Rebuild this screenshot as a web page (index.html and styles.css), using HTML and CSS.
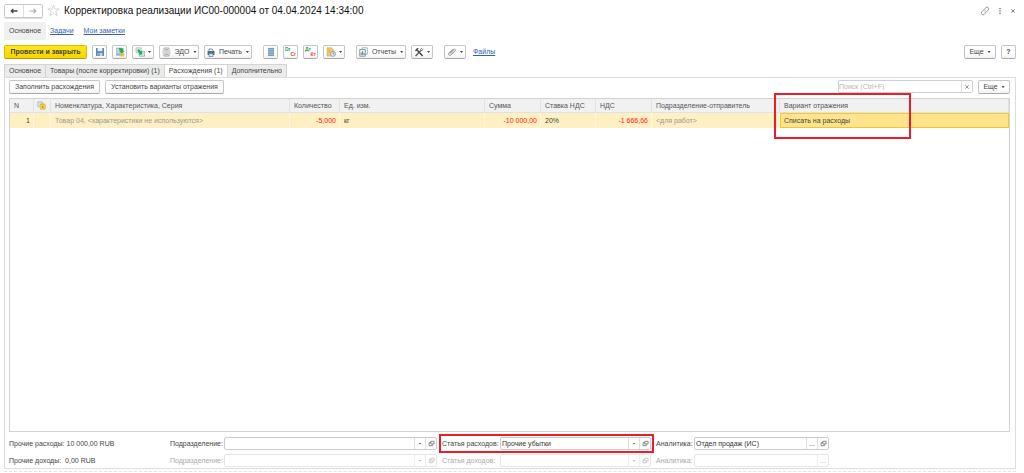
FILE: index.html
```
<!DOCTYPE html>
<html lang="ru">
<head>
<meta charset="utf-8">
<title>Корректировка реализации</title>
<link rel="stylesheet" href="styles.css">
</head>
<body>
<svg class="defs" aria-hidden="true">
  <symbol id="open" viewBox="0 0 8 8"><path d="M3.2 1.5H7v3H3.2zM3 3H1.3v3.5H5V4.8" fill="none" stroke="currentColor" stroke-width=".7"/></symbol>
</svg>
<div class="window">
  <header class="titlebar">
    <div class="history">
      <button class="hist" aria-label="Назад"><svg width="10" height="8" viewBox="0 0 10 8"><path d="M2 4h6.5M4.4 1.9L2.2 4l2.2 2.1" fill="none" stroke="#444" stroke-width="1.3"/></svg></button>
      <button class="hist" aria-label="Вперед"><svg width="10" height="8" viewBox="0 0 10 8"><path d="M1.5 4H8M5.6 1.9L7.8 4 5.6 6.1" fill="none" stroke="#aaa" stroke-width="1.1"/></svg></button>
    </div>
    <svg class="star" width="13" height="13" viewBox="0 0 13 13"><path d="M6.5 1l1.4 4h4.3L8.8 7.5l1.3 4.1-3.6-2.5-3.6 2.5 1.3-4.1L.8 5h4.3z" fill="#fff" stroke="#c4c4c4" stroke-width=".7"/></svg>
    <h1 class="title">Корректировка реализации ИС00-000004 от 04.04.2024 14:34:00</h1>
    <div class="winctl">
      <button class="plain" aria-label="Ссылка"><svg width="10" height="10" viewBox="0 0 10 10"><path d="M4.4 3.2l1.4-1.5a1.6 1.6 0 0 1 2.5 2.3L6.7 5.7a1.6 1.6 0 0 1-2.3 0M5.6 6.8L4.2 8.3A1.6 1.6 0 0 1 1.7 6l1.6-1.7a1.6 1.6 0 0 1 2.3 0" fill="none" stroke="#777" stroke-width=".7"/></svg></button>
      <button class="plain" aria-label="Меню"><svg width="4" height="8" viewBox="0 0 4 8"><path d="M1.3 1h1.4v1.3H1.3zM1.3 3.4h1.4v1.3H1.3zM1.3 5.8h1.4v1.3H1.3z" fill="#777"/></svg></button>
      <button class="plain" aria-label="Закрыть"><svg width="6" height="6" viewBox="0 0 6 6"><path d="M1.3 1.3l3.4 3.4M4.7 1.3L1.3 4.7" stroke="#777" stroke-width=".9"/></svg></button>
    </div>
  </header>

  <nav class="sections">
    <span class="section current">Основное</span>
    <a class="link" href="#">Задачи</a>
    <a class="link" href="#">Мои заметки</a>
  </nav>

  <div class="toolbar">
    <div class="group">
      <button class="btn primary">Провести и закрыть</button>
      <button class="btn icon" aria-label="Записать"><svg width="10" height="10" viewBox="0 0 10 10"><path d="M1 1h8v8H1z" fill="#5b88b5"/><path d="M2.6 1h4.8v3.2H2.6z" fill="#e6eef6"/><path d="M2.6 6h4.8v3H2.6z" fill="#c5d6e6"/><path d="M3.4 6.6h1.2V9H3.4z" fill="#4472a0"/></svg></button>
      <button class="btn icon" aria-label="Провести"><svg width="10" height="10" viewBox="0 0 10 10"><path d="M1.2.7h5.6v8H1.2z" fill="#8fb3ce"/><path d="M2.2 2.5h2.5M2.2 4.2h2M2.2 5.9h2.5" stroke="#fff" stroke-width=".8"/><path d="M4 1.2h4.4v3h1.2L7.1 6.4 4.8 4.2h1.4L4 2.6z" fill="#26a84b"/><path d="M5.4 6.2h3.9v3.3H5.4z" fill="#f0bf3c"/></svg></button>
      <button class="btn icon wide" aria-label="Создать на основании"><svg width="10" height="10" viewBox="0 0 10 10"><path d="M1 .8h5.3v5H1z" fill="#dce8e4" stroke="#8fa9a8" stroke-width=".6"/><path d="M4.5 4.3h5v5h-5z" fill="#cfe0ea" stroke="#7c9fb0" stroke-width=".6"/><path d="M2.3 3.2l1.3-1.1 2.5 2.5 1-1v4h-4l1.1-1.1z" fill="#1cb054"/></svg><i class="caret"></i></button>
      <button class="btn edo"><svg width="9" height="10" viewBox="0 0 9 10"><path d="M2 3V1h5v2M2 7v2h5V7M.5 4h8M.5 6h8M3 2.5h3M3 7.6h3" fill="none" stroke="#929292" stroke-width=".8"/></svg><span>ЭДО</span><i class="caret"></i></button>
      <button class="btn print"><svg width="8" height="9" viewBox="0 0 8 9"><path d="M2 3V1h3l1 1v1" fill="#fff" stroke="#557a96" stroke-width=".8"/><path d="M.5 3h7v4h-7z" fill="#4d718d"/><path d="M2 5.5h4v3H2z" fill="#dce6ed" stroke="#4d718d" stroke-width=".6"/></svg><span>Печать</span><i class="caret"></i></button>
    </div>
    <div class="group">
      <button class="btn icon" aria-label="Реестр"><svg width="10" height="10" viewBox="0 0 10 10"><path d="M2 1h6v8H2z" fill="#a9c8df"/><path d="M2 1.4h6M2 3.2h6M2 5h6M2 6.8h6M2 8.6h6" stroke="#5a82a3" stroke-width=".7"/></svg></button>
      <button class="btn icon" aria-label="Проводки Dr Cr"><span class="pair"><b class="dt">Dr</b><b class="ct">Cr</b></span></button>
      <button class="btn icon" aria-label="Проводки Дт Кт"><span class="pair"><b class="dt">Дт</b><b class="ct">Кт</b></span></button>
      <button class="btn icon wide" aria-label="Документы"><svg width="10" height="10" viewBox="0 0 10 10"><path d="M1 .8h4.5L7.6 3v6H1z" fill="#f3cd69" stroke="#d5a94b" stroke-width=".6"/><path d="M2.2 3.2h2.6M2.2 5h2" stroke="#c29333" stroke-width=".6"/><circle cx="7" cy="6.8" r="2.5" fill="#e8eef5" stroke="#7189aa" stroke-width=".7"/><path d="M7 5.2V7h1.5" fill="none" stroke="#456" stroke-width=".6"/></svg><i class="caret"></i></button>
    </div>
    <div class="group">
      <button class="btn reports"><svg width="9" height="10" viewBox="0 0 9 10"><path d="M3 .8h5.3v6.5H3z" fill="#fff" stroke="#7c98a6" stroke-width=".7"/><path d="M.7 2.5h5.6v6.7H.7z" fill="#edf4f6" stroke="#64889a" stroke-width=".8"/><path d="M2.2 8V5.5" stroke="#de5148"/><path d="M3.6 8V4" stroke="#3ea85d"/><path d="M5 8V6" stroke="#4679ba"/></svg><span>Отчеты</span><i class="caret"></i></button>
      <button class="btn icon wide" aria-label="Настройки"><svg width="10" height="10" viewBox="0 0 10 10"><path d="M3 3l5.6 6" fill="none" stroke="#444" stroke-width="1.5"/><path d="M1 3.2L3.2 1l1.6.5-2.6 2.7z" fill="#444"/><path d="M1.6 9l5-5.2" fill="none" stroke="#555" stroke-width="1.3"/><path d="M8 .9L6.6 2.3v1.2h1.3l1.5-1.4" fill="none" stroke="#555" stroke-width=".9"/></svg><i class="caret"></i></button>
    </div>
    <div class="group">
      <button class="btn icon wide" aria-label="Присоединенные файлы"><svg width="10" height="10" viewBox="0 0 10 10"><path d="M2.5 6.4l3.9-3.9c1.5-1.2 2.7.3 1.6 1.6L4.3 7.8C2.6 9.3.7 7.5 2.1 5.8l3.5-3.5M3.7 6.7l3.1-3.1" fill="none" stroke="#777" stroke-width=".8"/></svg><i class="caret"></i></button>
      <a class="link files" href="#">Файлы</a>
    </div>
    <div class="group end">
      <button class="btn more"><span>Еще</span><i class="caret"></i></button>
      <button class="btn icon help">?</button>
    </div>
  </div>

  <div class="tabs" role="tablist">
    <button class="tab" role="tab">Основное</button>
    <button class="tab" role="tab">Товары (после корректировки) (1)</button>
    <button class="tab active" role="tab" aria-selected="true">Расхождения (1)</button>
    <button class="tab" role="tab">Дополнительно</button>
  </div>

  <main class="panel">
    <div class="commands">
      <button class="btn fill">Заполнить расхождения</button>
      <button class="btn variants">Установить варианты отражения</button>
      <div class="search">
        <input class="search-input" type="text" aria-label="Поиск" placeholder="Поиск (Ctrl+F)">
        <button class="addon" aria-label="Очистить"><svg width="6" height="6" viewBox="0 0 6 6"><path d="M1.3 1.3l3.4 3.4M4.7 1.3L1.3 4.7" stroke="#777" stroke-width=".8"/></svg></button>
      </div>
      <button class="btn more"><span>Еще</span><i class="caret"></i></button>
    </div>

    <div class="list">
      <table class="grid">
        <colgroup><col class="c-n"><col class="c-mark"><col class="c-item"><col class="c-qty"><col class="c-unit"><col class="c-sum"><col class="c-rate"><col class="c-vat"><col class="c-dept"><col></colgroup>
        <thead>
          <tr>
            <th>N</th>
            <th class="mark"><svg width="9" height="9" viewBox="0 0 9 9"><path d="M.8.8H5v5H.8z" fill="#d9dde0" stroke="#aab" stroke-width=".6"/><path d="M3.3 3.5h4.9v4.7H3.3z" fill="#f7cf45" stroke="#dba928" stroke-width=".6"/><path d="M4.5 3.4V2.2h2.4v1.2" fill="none" stroke="#d9ac32" stroke-width=".7"/><path d="M5.7 5v2" stroke="#8b6c14" stroke-width=".8"/></svg></th>
            <th>Номенклатура, Характеристика, Серия</th>
            <th>Количество</th>
            <th>Ед. изм.</th>
            <th>Сумма</th>
            <th>Ставка НДС</th>
            <th>НДС</th>
            <th>Подразделение-отправитель</th>
            <th class="marked">Вариант отражения<span class="frame frame-column"></span></th>
          </tr>
        </thead>
        <tbody>
          <tr>
            <td class="num">1</td>
            <td></td>
            <td class="muted">Товар 04, &lt;характеристики не используются&gt;</td>
            <td class="num neg">-5,000</td>
            <td>кг</td>
            <td class="num neg">-10 000,00</td>
            <td>20%</td>
            <td class="num neg">-1 666,66</td>
            <td class="muted">&lt;для работ&gt;</td>
            <td class="selected">Списать на расходы</td>
          </tr>
        </tbody>
      </table>
    </div>

    <div class="details">
      <span class="total">Прочие расходы: 10 000,00 RUB</span>
      <div class="field f-dept">
        <label for="dept1">Подразделение:</label>
        <div class="box"><input id="dept1" type="text"><button class="addon" aria-label="Выбрать"><i class="caret"></i></button><button class="addon" aria-label="Открыть"><svg width="7" height="7"><use href="#open"/></svg></button></div>
      </div>
      <div class="field f-item marked">
        <label for="item1">Статья расходов:</label>
        <div class="box"><input id="item1" type="text" value="Прочие убытки"><button class="addon" aria-label="Выбрать"><i class="caret"></i></button><button class="addon" aria-label="Открыть"><svg width="7" height="7"><use href="#open"/></svg></button></div>
        <span class="frame frame-field"></span>
      </div>
      <div class="field f-an">
        <label for="an1">Аналитика:</label>
        <div class="box"><input id="an1" type="text" value="Отдел продаж (ИС)"><button class="addon">...</button><button class="addon" aria-label="Открыть"><svg width="7" height="7"><use href="#open"/></svg></button></div>
      </div>

      <span class="total">Прочие доходы:&nbsp; 0,00 RUB</span>
      <div class="field f-dept off">
        <label for="dept2">Подразделение:</label>
        <div class="box"><input id="dept2" type="text" disabled><button class="addon" aria-label="Выбрать" disabled><i class="caret"></i></button><button class="addon" aria-label="Открыть" disabled><svg width="7" height="7"><use href="#open"/></svg></button></div>
      </div>
      <div class="field f-item off">
        <label for="item2">Статья доходов:</label>
        <div class="box"><input id="item2" type="text" disabled><button class="addon" aria-label="Выбрать" disabled><i class="caret"></i></button><button class="addon" aria-label="Открыть" disabled><svg width="7" height="7"><use href="#open"/></svg></button></div>
      </div>
      <div class="field f-an off">
        <label for="an2">Аналитика:</label>
        <div class="box"><input id="an2" type="text" disabled><button class="addon" disabled>...</button></div>
      </div>
    </div>
  </main>
  <div class="bottom"></div>
</div>
</body>
</html>
```
FILE: styles.css
```
* { box-sizing: border-box; }
body {
  margin: 0;
  background: #fff;
  color: #444;
  font: 7px/12px "Liberation Sans", Arial, sans-serif;
}
button, input { font: inherit; color: inherit; margin: 0; }
button { padding: 0; }
svg { display: block; flex: none; }
.defs { position: absolute; width: 0; height: 0; }

.window {
  min-height: 100vh;
  display: flex;
  flex-direction: column;
  padding: 3px 8px 1px 4px;
}

.titlebar { display: flex; align-items: center; height: 15px; }
.history {
  display: flex;
  height: 14px;
  border: 1px solid #c8c8c8;
  border-radius: 2px;
  box-shadow: 0 1px 0 #ddd;
}
.hist {
  width: 18px;
  border: 0;
  background: #fff;
  display: flex;
  align-items: center;
  justify-content: center;
}
.hist + .hist { width: 19px; border-left: 1px solid #ddd; }
.star { margin: 0 4px; }
.title { margin: 0; font-size: 10px; line-height: 14px; font-weight: 400; color: #111; }
.winctl { margin-left: auto; display: flex; align-items: center; gap: 8px; }
.plain { border: 0; background: none; display: flex; }

.sections { display: flex; align-items: center; gap: 10px; height: 18px; margin-top: 4px; }
.section { padding: 3px 5px; margin-right: -6px; }
.current { background: #f0f0f0; border-radius: 2px; }
.link { color: #2f62b5; text-decoration: underline; }

.toolbar { display: flex; gap: 11px; margin-top: 5px; }
.group { display: flex; align-items: center; gap: 5px; }
.end { margin-left: auto; }
.btn {
  height: 14px;
  display: flex;
  align-items: center;
  justify-content: center;
  gap: 4px;
  border: 1px solid #c6c6c6;
  border-bottom-color: #aaa;
  border-radius: 2px;
  background: linear-gradient(#fff 60%, #f2f2f2);
  line-height: 12px;
  white-space: nowrap;
}
.primary {
  width: 83px;
  font-weight: 700;
  background: linear-gradient(#ffe61a, #f7d500);
  border-color: #d9bd00;
  border-bottom-color: #b59d00;
}
.icon { width: 15px; }
.wide { width: 22px; gap: 3px; }
.edo { width: 40px; }
.print { width: 48px; }
.reports { width: 50px; }
.more { width: 32px; }
.fill { width: 91px; }
.variants { width: 119px; }
.help { font-weight: 700; }
.files { margin-left: 2px; }
.caret {
  width: 3px;
  height: 2px;
  background: currentColor;
  clip-path: polygon(0 0, 100% 0, 50% 100%);
}
.pair { display: flex; flex-direction: column; width: 11px; font-size: 5px; line-height: 5px; }
.dt { color: #24a05a; text-align: left; }
.ct { color: #e14a4a; text-align: right; }

.tabs { display: flex; margin-top: 5px; }
.tab {
  height: 13px;
  padding: 0 4px;
  border: 1px solid #d4d4d4;
  border-width: 1px 1px 0 0;
  background: #ebebeb;
  line-height: 12px;
}
.tab:first-child { border-left-width: 1px; }
.active { background: #fff; }

.panel {
  flex: 1;
  display: flex;
  flex-direction: column;
  padding: 2px 5px 1px 4px;
  border: 1px solid #ddd;
}
.commands { display: flex; gap: 5px; }
.search { display: flex; width: 135px; height: 13px; margin-left: auto; border: 1px solid #d0d0d0; border-radius: 2px; }
.search-input { flex: 1; min-width: 0; border: 0; padding: 0; background: none; outline: 0; }
.search-input::placeholder { color: #b5b5b5; }
.addon {
  width: 11px;
  flex: none;
  display: flex;
  align-items: center;
  justify-content: center;
  border: 0;
  border-left: 1px solid #ddd;
  background: none;
  line-height: 10px;
}

.list { flex: 1; margin-top: 4px; border: 1px solid #d2d2d2; }
.grid { width: 100%; table-layout: fixed; border-collapse: separate; border-spacing: 0; }
.c-n { width: 24px; }
.c-mark { width: 17px; }
.c-item { width: 239px; }
.c-qty { width: 50px; }
.c-unit { width: 145px; }
.c-sum { width: 56px; }
.c-rate { width: 55px; }
.c-vat { width: 56px; }
.c-dept { width: 128px; }
.grid th, .grid td {
  padding: 0 4px;
  white-space: nowrap;
  text-align: left;
  font-weight: 400;
}
.grid th { height: 14px; background: #f1f1f1; border-right: 1px solid #e2e2e2; border-bottom: 1px solid #e2e2e2; color: #555; }
.grid td { height: 15px; background: #fff0c4; border-right: 1px solid #fff6dd; }
.grid .mark { padding: 0 4px 0 3px; }
.grid .num { text-align: right; padding: 0 3px; }
.grid .neg { color: #ff1a10; }
.grid .muted { color: #999; }
.grid .selected { background: #ffe48c; border: 1px solid #f5c832; padding: 0 3px; }

.marked { position: relative; }
.frame { position: absolute; border: 2px solid #ec1c2b; pointer-events: none; z-index: 1; }
.frame-column { left: -6px; top: -6px; width: 137px; height: 46px; }
.frame-field { inset: -3px; }

.details {
  display: grid;
  grid-template-columns: 156fr 267fr 209fr 173fr 176fr;
  gap: 4px 5px;
  margin-top: 5px;
}
.total, .f-dept, .f-item, .f-an { min-width: 0; }
.total { grid-column: 1; white-space: nowrap; line-height: 13px; }
.field { display: grid; align-items: center; white-space: nowrap; }
.f-dept { grid-template-columns: 54px 1fr; }
.f-item { grid-template-columns: 58px 1fr; }
.f-an { grid-template-columns: 38px 1fr; }
.box { display: flex; height: 13px; border: 1px solid #ccc; border-radius: 2px; }
.box input { flex: 1; min-width: 0; width: 0; border: 0; padding: 0 1px; background: none; outline: 0; color: #333; }
.off { color: #aaa; }
.off .box { border-color: #e6e6e6; }
.off .addon { border-color: #eee; }
.bottom { margin-top: 2px; height: 1px; border-top: 1px dashed #e4e4e4; }
```
